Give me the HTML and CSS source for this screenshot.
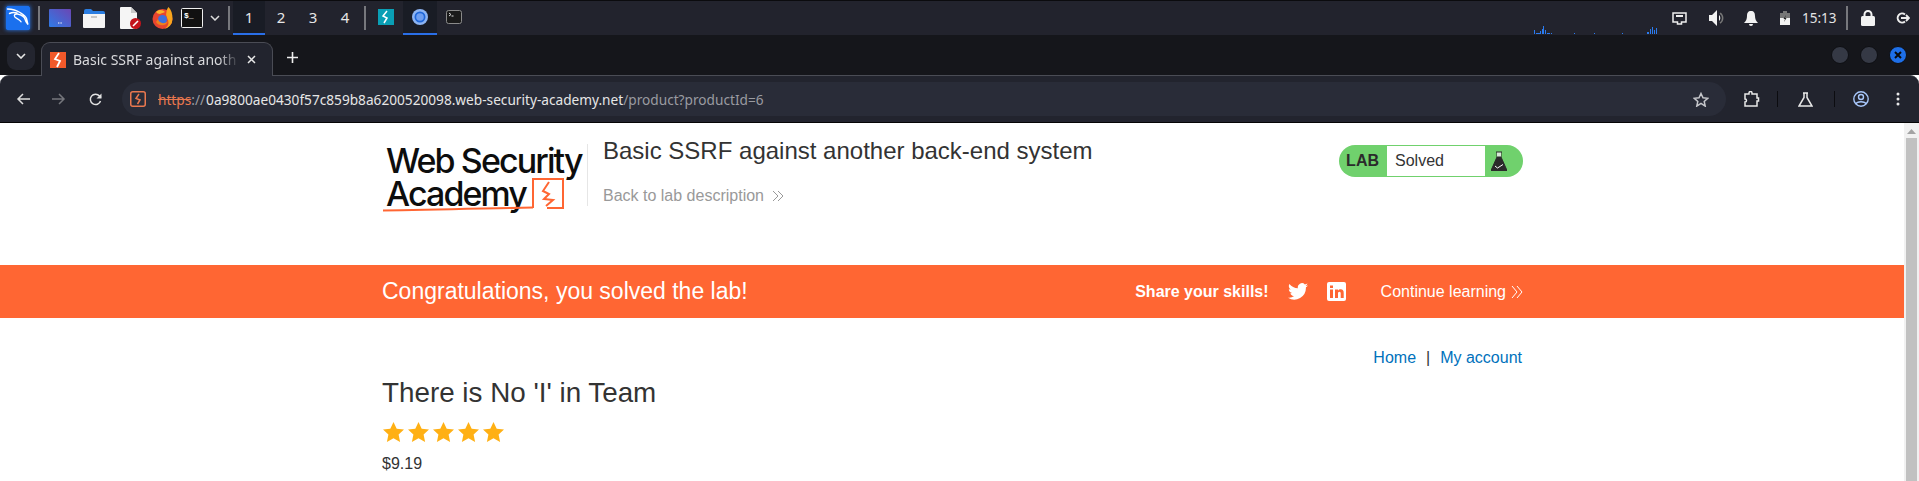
FILE: index.html
```html
<!DOCTYPE html>
<html lang="en">
<head>
<meta charset="utf-8">
<title>Basic SSRF against another back-end system</title>
<link rel="stylesheet" href="styles.css">
</head>
<body>
<div class="panel">
  <div class="kali"><svg width="24" height="24" viewBox="0 0 24 24"><rect width="24" height="24" rx="1.500" fill="#1a70ee"/><path d="M1.500 3c5 .2 9 1.300 12.500 3.500 3 1.800 5.500 3 6.500 6 .6 2 .8 4 1.500 6-1.300-1.400-2.400-3.200-2.800-5-.8-2.800-3.800-4.600-7.700-5.500-2.500-.3-3.800 1-2.700 2.800 1.500 2 5 2.400 6.200 5M3.500 7.500C6 6.300 8.500 6.300 11 7" fill="none" stroke="#fff" stroke-width="1.400" stroke-linecap="round"/></svg></div>
  <span class="sep sep-a"></span>
  <svg class="launch l1" width="22" height="18" viewBox="0 0 22 18"><defs><linearGradient id="wg" x1="0" y1="1" x2="1" y2="0"><stop offset="0" stop-color="#2f7be6"/><stop offset="1" stop-color="#6b46b4"/></linearGradient></defs><rect width="22" height="18" rx="1" fill="url(#wg)"/><path d="M9 14h4" stroke="#fff" stroke-width="1.200" stroke-dasharray="1 .6"/></svg>
  <svg class="launch l2" width="22" height="20" viewBox="0 0 22 20"><path d="M1 3a2 2 0 0 1 2-2h5l2 2h10a2 2 0 0 1 2 2v2H1z" fill="#2a7de1"/><path d="M0 6h22v13a1 1 0 0 1-1 1H1a1 1 0 0 1-1-1z" fill="#f4f4f4"/><path d="M8 9h6" stroke="#b9b9b9" stroke-width="1.500"/></svg>
  <svg class="launch l3" width="21" height="22" viewBox="0 0 21 22"><path d="M0 1a1 1 0 0 1 1-1h10l6 6v15a1 1 0 0 1-1 1H1a1 1 0 0 1-1-1z" fill="#f5f5f5"/><path d="M11 0l6 6h-6z" fill="#c9c9c9"/><circle cx="15.500" cy="16.500" r="5.500" fill="#c4141c"/><path d="M13 19l5-5" stroke="#fff" stroke-width="1.600"/></svg>
  <svg class="launch l4" width="21" height="22" viewBox="0 0 21 22"><circle cx="10.500" cy="12" r="10" fill="#e8452f"/><path d="M20.500 12a10 10 0 0 1-9 10c5-2 6-6 4-10-1-3-2-4-1-7 0-2 1-4 2-5 3 3 4 7 4 12z" fill="#f9a51d"/><path d="M4 5c3-3 7-2 9 0-1 1-4 1-5 2-2 0-3-1-4-2z" fill="#fbb22c"/><circle cx="10.500" cy="12.500" r="4.500" fill="#3f70dd"/><path d="M6 12c1 4 6 6 10 2-1 5-9 6-12 1z" fill="#f0801d"/></svg>
  <svg class="launch l5" width="22" height="20" viewBox="0 0 22 20"><rect x=".5" y=".5" width="21" height="19" rx="1" fill="#111" stroke="#f0f0f0"/><text class="term-text" x="3" y="10">$_</text></svg>
  <svg class="launch l6" width="10" height="6" viewBox="0 0 10 6"><path d="M1 1l4 4 4-4" fill="none" stroke="#ddd" stroke-width="1.500"/></svg>
  <span class="sep sep-b"></span>
  <div class="ws active">1</div>
  <div class="ws">2</div>
  <div class="ws">3</div>
  <div class="ws">4</div>
  <span class="sep sep-c"></span>
  <div class="task task-a"><svg width="16" height="16" viewBox="0 0 16 16"><rect width="16" height="16" fill="#0a9fb5"/><path d="M9 2L5 7l4 2-3 5" fill="none" stroke="#fff" stroke-width="1.500"/></svg></div>
  <div class="task task-b active"><svg width="16" height="16" viewBox="0 0 16 16"><circle cx="8" cy="8" r="8" fill="#8db4f2"/><circle cx="8" cy="8" r="5.500" fill="#1f66d8"/><circle cx="8" cy="8" r="3.800" fill="#6f9ff0"/></svg></div>
  <div class="task task-c"><svg width="16" height="14" viewBox="0 0 16 14"><rect x=".5" y=".5" width="15" height="13" rx="2" fill="#1a1a1a" stroke="#8a8a8a"/><path d="M3 3l2 1.500-2 1.500M5.500 6h2" stroke="#ddd" fill="none"/></svg></div>
  <svg class="graph" width="127" height="10" viewBox="0 0 127 10"><path d="M0 9V5h1v4zM2 9V8h4v1zM6 9V6h1v3zM8 9V4h1v5zM9 9V1h1v8zM11 9V5h1v4zM13 9V8h3v1zM17 9V8h1v1zM40 9V8h1v1zM60 9V8h1v1zM88 9V8h1v1zM113 9V7h2v2zM116 9V4h1v5zM118 9V2h1v7zM120 9V5h1v4zM122 9V3h1v6z" fill="#2a7bf0"/></svg>
  <svg class="tray t1" width="15" height="13" viewBox="0 0 15 13"><path d="M1 1h13v9H9.500v2h-4v-2H1z" fill="none" stroke="#eee" stroke-width="1.500"/><path d="M4 3h7v2H4z" fill="#eee"/></svg>
  <svg class="tray t2" width="18" height="16" viewBox="0 0 18 16"><path d="M0 5h3l5-5v16l-5-5H0z" fill="#f2f2f2"/><path d="M11 3a6 6 0 0 1 0 10" fill="none" stroke="#777" stroke-width="1.500"/><path d="M10 5a4 4 0 0 1 0 6z" fill="#f2f2f2"/></svg>
  <svg class="tray t3" width="14" height="15" viewBox="0 0 14 15"><path d="M7 0c3 0 4 2 4 5 0 3 1 5 3 7H0c2-2 3-4 3-7 0-3 1-5 4-5zM5 13h4a2 2 0 0 1-4 0z" fill="#f2f2f2"/></svg>
  <svg class="tray t4" width="10" height="14" viewBox="0 0 10 14"><path d="M3 0h4v2h3v5H0V2h3z" fill="#777"/><path d="M0 7h10v7H0z" fill="#f2f2f2"/><path d="M6 4L3.500 8H5l-1 3 2.500-4H5z" fill="#222"/></svg>
  <span class="clock">15:13</span>
  <span class="sep sep-d"></span>
  <svg class="tray t5" width="14" height="16" viewBox="0 0 14 16"><path d="M3.500 7V4.500a3.500 3.500 0 0 1 7 0V7" fill="none" stroke="#f2f2f2" stroke-width="2"/><rect y="6" width="14" height="10" rx="1.500" fill="#f2f2f2"/></svg>
  <svg class="tray t6" width="14" height="12" viewBox="0 0 14 12"><path d="M9 2.500A4.500 4.500 0 1 0 9 9.500" fill="none" stroke="#eee" stroke-width="2"/><path d="M5 6h8M10 3l3 3-3 3" fill="none" stroke="#eee" stroke-width="1.800"/></svg>
</div>

<div class="tabstrip">
  <div class="tabsearch"><svg width="10" height="6" viewBox="0 0 10 6"><path d="M1 1l4 4 4-4" fill="none" stroke="#e6e6e6" stroke-width="1.600"/></svg></div>
  <div class="tab">
    <svg class="favicon" width="16" height="16" viewBox="0 0 16 16"><rect width="16" height="16" fill="#f2592a"/><path d="M9 1L5 7l5 2-3 6" fill="none" stroke="#fff" stroke-width="1.800"/></svg>
    <span class="tab-title">Basic SSRF against anoth</span>
    <svg class="tab-x" width="9" height="9" viewBox="0 0 9 9"><path d="M1 1l7 7M8 1L1 8" stroke="#e8e8e8" stroke-width="1.500"/></svg>
  </div>
  <svg class="newtab" width="11" height="11" viewBox="0 0 11 11"><path d="M5.500 0v11M0 5.500h11" stroke="#eee" stroke-width="1.600"/></svg>
  <div class="winbtns">
    <span class="winbtn"></span>
    <span class="winbtn"></span>
    <span class="winbtn close"><svg width="8" height="8" viewBox="0 0 8 8"><path d="M1 1l6 6M7 1L1 7" stroke="#0b0b0b" stroke-width="2"/></svg></span>
  </div>
</div>

<div class="toolbar">
  <svg class="nav n1" width="14" height="12" viewBox="0 0 14 12"><path d="M14 6H2M7 1L2 6l5 5" fill="none" stroke="#ddd" stroke-width="1.500"/></svg>
  <svg class="nav n2" width="14" height="12" viewBox="0 0 14 12"><path d="M0 6h12M7 1l5 5-5 5" fill="none" stroke="#75767c" stroke-width="1.500"/></svg>
  <svg class="nav n3" width="13" height="13" viewBox="0 0 13 13"><path d="M11.500 8a5.200 5.200 0 1 1-1-5l1.500 1.500" fill="none" stroke="#e2e2e2" stroke-width="1.500"/><path d="M12.500 .5v5h-5z" fill="#e2e2e2"/></svg>
  <div class="omnibox">
    <svg class="omni-icon" width="16" height="16" viewBox="0 0 16 16"><rect x=".75" y=".75" width="14.500" height="14.500" rx="2" fill="none" stroke="#e9784f" stroke-width="1.500"/><path d="M9 3L6 7.500l4 1.500-2.500 4" fill="none" stroke="#e9784f" stroke-width="1.500"/></svg>
    <span class="url"><span class="url-s">https</span><span class="url-dim">://</span><span class="url-host">0a9800ae0430f57c859b8a6200520098.web-security-academy.net</span><span class="url-dim">/product?productId=6</span></span>
    <svg class="star" width="16" height="15" viewBox="0 0 16 15"><path d="M8 1.500l2 4.300 4.700.5-3.500 3.200 1 4.600L8 11.300l-4.200 2.800 1-4.600L1.300 6.300 6 5.800z" fill="none" stroke="#c6c7cb" stroke-width="1.500"/></svg>
  </div>
  <svg class="tool x1" width="16" height="16" viewBox="0 0 16 16"><path d="M1 3h4V2a1.500 1.500 0 0 1 3 0v1h5v4h1.500v3H13v5H1v-4c2 0 2-3 0-3z" fill="none" stroke="#e8e8e8" stroke-width="1.500"/></svg>
  <span class="tooldiv d1"></span>
  <svg class="tool x2" width="15" height="15" viewBox="0 0 15 15"><path d="M5 1h5M6 1v4.500L1 14h13L9 5.500V1" fill="none" stroke="#e8e8e8" stroke-width="1.500"/></svg>
  <span class="tooldiv d2"></span>
  <svg class="tool x3" width="16" height="16" viewBox="0 0 16 16"><circle cx="8" cy="8" r="7.200" fill="none" stroke="#a8c7fa" stroke-width="1.400"/><circle cx="8" cy="6" r="2.500" fill="none" stroke="#a8c7fa" stroke-width="1.400"/><path d="M3 13c1-3 9-3 10 0" fill="none" stroke="#a8c7fa" stroke-width="1.400"/></svg>
  <svg class="tool x4" width="4" height="14" viewBox="0 0 4 14"><circle cx="2" cy="2" r="1.500" fill="#e8e8e8"/><circle cx="2" cy="7" r="1.500" fill="#e8e8e8"/><circle cx="2" cy="12" r="1.500" fill="#e8e8e8"/></svg>
</div>

<div class="viewport">
  <div class="page">
    <header class="lab-header">
      <div class="logo">
        <div class="logo-l1">Web Security</div>
        <div class="logo-l2">Academy</div>
        <svg class="logo-mark" width="204" height="38" viewBox="0 0 204 38"><path d="M1 35.500c50-.5 100-2 150-3" fill="none" stroke="#ff6633" stroke-width="2"/><path d="M151 33V4h30v29h-16" fill="none" stroke="#ff6633" stroke-width="2"/><path d="M167 7l-6 9 6 3-5 5 9 1-7 6" fill="none" stroke="#ff6633" stroke-width="2"/></svg>
      </div>
      <div class="lab-title">
        <h2>Basic SSRF against another back-end system</h2>
        <a class="back">Back to lab description <svg class="dbl" width="12" height="12" viewBox="0 0 12 12"><path d="M1 1l5 5-5 5M6 1l5 5-5 5" fill="none" stroke="#999" stroke-width="1"/></svg></a>
      </div>
      <div class="badge">
        <span class="badge-lab">LAB</span>
        <span class="badge-status">Solved</span>
        <span class="badge-icon"><svg width="16" height="20" viewBox="0 0 16 20"><path d="M5 1h6M6 1v5L0 19.500h16L10 6V1" fill="#2b2b2b" stroke="#2b2b2b" stroke-width="1"/><path d="M6 1.500h4v4H6z" fill="#d8e8d8"/><path d="M4 15l2.500 2L12 13.500" fill="none" stroke="#fff" stroke-width="1"/></svg></span>
      </div>
    </header>
    <section class="banner">
      <div class="banner-inner">
        <h4>Congratulations, you solved the lab!</h4>
        <div class="share">
          <span class="share-label">Share your skills!</span>
          <svg class="tw" width="20" height="17" viewBox="0 0 24 20"><path d="M24 2.400c-.9.400-1.800.700-2.800.8 1-.6 1.800-1.600 2.200-2.700-1 .6-2 1-3.100 1.200A4.900 4.900 0 0 0 11.900 6.200C7.800 6 4.200 4 1.700.9c-1.300 2.200-.7 5.100 1.500 6.600-.8 0-1.600-.2-2.200-.6 0 2.400 1.700 4.500 4 5-.7.200-1.500.2-2.200.1.600 2 2.500 3.400 4.600 3.400A9.900 9.900 0 0 1 0 17.400 14 14 0 0 0 21.500 5c1-.7 1.800-1.600 2.500-2.600z" fill="#fff"/></svg>
          <svg class="li" width="19" height="19" viewBox="0 0 19 19"><rect width="19" height="19" rx="2" fill="#fff"/><path d="M3 7.500h3V16H3zM3 3.500h3v2.500H3zM8 7.500h3v1.200c.6-1 1.600-1.400 2.700-1.400 2 0 3 1.300 3 3.700V16h-3v-4.500c0-1-.4-1.700-1.300-1.700-1 0-1.400.7-1.400 1.700V16H8z" fill="#ff6633"/></svg>
          <a class="continue">Continue learning <svg class="dbl" width="12" height="14" viewBox="0 0 12 14"><path d="M1 1l5 6-5 6M6 1l5 6-5 6" fill="none" stroke="#fff" stroke-width="1"/></svg></a>
        </div>
      </div>
    </section>
    <main class="content">
      <nav class="top-links"><a>Home</a><span class="pipe">|</span><a>My account</a></nav>
      <h3>There is No 'I' in Team</h3>
      <div class="stars">
        <svg width="21" height="20" viewBox="0 0 21 20"><path class="s" d="M10.500 0l3.200 6.800 7.300.8-5.400 5 1.500 7.400-6.600-3.700L3.900 20l1.500-7.400L0 7.600l7.300-.8z"/></svg>
        <svg width="21" height="20" viewBox="0 0 21 20"><path class="s" d="M10.500 0l3.200 6.800 7.300.8-5.400 5 1.500 7.400-6.600-3.700L3.900 20l1.500-7.400L0 7.600l7.300-.8z"/></svg>
        <svg width="21" height="20" viewBox="0 0 21 20"><path class="s" d="M10.500 0l3.200 6.800 7.300.8-5.400 5 1.500 7.400-6.600-3.700L3.900 20l1.500-7.400L0 7.600l7.300-.8z"/></svg>
        <svg width="21" height="20" viewBox="0 0 21 20"><path class="s" d="M10.500 0l3.200 6.800 7.300.8-5.400 5 1.500 7.400-6.600-3.700L3.900 20l1.500-7.400L0 7.600l7.300-.8z"/></svg>
        <svg width="21" height="20" viewBox="0 0 21 20"><path class="s" d="M10.500 0l3.200 6.800 7.300.8-5.400 5 1.500 7.400-6.600-3.700L3.900 20l1.500-7.400L0 7.600l7.300-.8z"/></svg>
      </div>
      <div class="price">$9.19</div>
    </main>
  </div>
  <div class="scrollbar">
    <svg class="sb-arrow" width="9" height="5" viewBox="0 0 9 5"><path d="M4.500 0L9 5H0z" fill="#a3a3a3"/></svg>
    <div class="sb-thumb"></div>
  </div>
</div>
</body>
</html>
```
FILE: styles.css
```css
* { box-sizing: border-box; }
html, body { margin: 0; height: 100%; overflow: hidden; }
body {
  width: 1919px; height: 481px; display: flex; flex-direction: column;
  font-family: "Liberation Sans", Arial, sans-serif; background: #fff; color: #333;
}
svg { display: block; flex: none; }
h2, h3, h4 { margin: 0; font-weight: 400; }

/* desktop panel */
.panel {
  height: 35px; flex: none; display: flex; align-items: center;
  background: #22232d; border-top: 1px solid #0b0b0e;
  font-family: "Noto Sans", sans-serif;
}
.kali { margin-left: 6px; box-shadow: 0 0 4px #2a7bf0; }
.sep { width: 2px; height: 24px; background: #77787d; flex: none; }
.sep-a { margin-left: 8px; }
.l1 { margin-left: 9px; }
.l2 { margin-left: 12px; }
.l3 { margin-left: 15px; }
.l4 { margin-left: 11px; }
.l5 { margin-left: 8px; }
.l6 { margin-left: 7px; }
.term-text { font: 700 8px "Liberation Mono", monospace; fill: #fff; }
.sep-b { margin-left: 8px; margin-right: 3px; }
.ws {
  width: 32px; height: 34px; display: flex; align-items: center; justify-content: center;
  font-size: 15px; color: #e6e6e6; border-bottom: 2px solid transparent;
}
.ws.active { background: #191c25; border-bottom-color: #2a6fe8; }
.sep-c { margin-left: 3px; margin-right: 12px; }
.task {
  height: 34px; display: flex; align-items: center; justify-content: center;
  border-bottom: 2px solid transparent;
}
.task-a { width: 16px; }
.task-b { width: 34px; margin-left: 9px; }
.task-b.active { background: #191c25; border-bottom-color: #2a6fe8; }
.task-c { width: 16px; margin-left: 9px; }
.graph { margin-left: 1072px; align-self: flex-end; }
.t1 { margin-left: 11px; }
.t2 { margin-left: 22px; }
.t3 { margin-left: 17px; }
.t4 { margin-left: 22px; }
.clock { margin-left: 12px; font-size: 13.5px; color: #e4e4e4; width: 32px; white-space: nowrap; }
.sep-d { margin-left: 12px; }
.t5 { margin-left: 13px; }
.t6 { margin-left: 21px; }

/* browser tab strip */
.tabstrip {
  height: 40px; flex: none; display: flex; align-items: flex-end;
  background: #15161b; position: relative; z-index: 1;
}
.tabsearch {
  width: 28px; height: 28px; margin: 0 6px 5px 7px; border-radius: 9px; background: #23252f;
  display: flex; align-items: center; justify-content: center;
}
.tab {
  width: 232px; height: 34px; display: flex; align-items: center; padding: 0 11px 0 8px;
  background: #22242e; border: 1px solid #4a4c55; border-bottom: 0;
  border-radius: 9px 9px 0 0; margin-bottom: -1px; position: relative;
  font-family: "Noto Sans", sans-serif; color: #d8d9dc; font-size: 14px;
}
.tab-title {
  margin-left: 7px; width: 166px; overflow: hidden; white-space: nowrap;
  -webkit-mask-image: linear-gradient(90deg, #000 88%, transparent);
  mask-image: linear-gradient(90deg, #000 88%, transparent);
}
.tab-x { margin-left: auto; margin-right: 5px; }
.newtab { margin: 0 0 12px 14px; }
.winbtns { margin-left: auto; margin-right: 12px; margin-bottom: 11px; display: flex; gap: 11px; }
.winbtn {
  width: 18px; height: 18px; border-radius: 50%; background: #353945; border: 1px solid #0e0f13;
  display: flex; align-items: center; justify-content: center;
}
.winbtn.close { background: #1e6fe8; }

/* browser toolbar */
.toolbar {
  height: 48px; flex: none; display: flex; align-items: center;
  background: #22242e; border-top: 1px solid #4a4c55; border-bottom: 1px solid #050506;
  border-radius: 9px 9px 0 0;
}
.n1 { margin-left: 16px; }
.n2 { margin-left: 22px; }
.n3 { margin-left: 23px; }
.omnibox {
  width: 1604px; height: 34px; margin-left: 20px; border-radius: 17px; background: #292c38;
  display: flex; align-items: center; padding: 0 17px 0 8px;
  font-family: "Noto Sans", sans-serif; font-size: 13.67px; color: #e6e6e6;
}
.url { margin-left: 12px; white-space: nowrap; }
.url-s { color: #e9784f; text-decoration: line-through; }
.url-dim { color: #9a9ba1; }
.url-host { margin-left: 1px; }
.star { margin-left: auto; }
.x1 { margin-left: 18px; }
.tooldiv { width: 1px; height: 16px; background: #0c0c10; flex: none; }
.d1 { margin-left: 17px; }
.x2 { margin-left: 20px; }
.d2 { margin-left: 21px; }
.x3 { margin-left: 18px; }
.x4 { margin-left: 27px; }

/* page */
.viewport { flex: 1; display: flex; min-height: 0; }
.page { flex: 1; min-width: 0; }
.lab-header {
  height: 142px; display: flex; align-items: flex-start; padding: 21px 381px 0 382px;
}
.logo {
  width: 205px; height: 64px; position: relative; padding-left: 4px;
  font-family: Inter, sans-serif; color: #0d0d0d; font-weight: 500;
  font-size: 34px; letter-spacing: -1.9px; line-height: 34px; white-space: nowrap;
}
.logo-l1 { height: 33px; }
.logo-l2 { height: 31px; }
.logo-mark { position: absolute; left: 0; top: 31px; }
.lab-title {
  height: 62px; padding-left: 15px; border-left: 1px solid #e6e6e6;
}
.lab-title h2 { font-size: 24px; line-height: 28px; margin-top: -7px; color: #333; white-space: nowrap; }
.back {
  display: flex; align-items: center; gap: 8px; margin-top: 22px;
  font-size: 16px; line-height: 18px; color: #999;
}
.badge {
  margin-left: auto; margin-top: 1px; width: 184px; height: 32px; flex: none;
  display: flex; background: #70d16d; border-radius: 16px; padding: 1px 0;
}
.badge-lab { width: 48px; font-weight: 700; font-size: 16px; line-height: 30px; text-align: right; color: #2b2b2b; padding-right: 8px; }
.badge-status { width: 98px; background: #fff; font-size: 16px; line-height: 30px; padding-left: 8px; }
.badge-icon { flex: 1; display: flex; align-items: center; padding-left: 6px; }
.banner { height: 53px; background: #ff6633; color: #fff; }
.banner-inner {
  height: 100%; display: flex; align-items: center; justify-content: space-between;
  padding: 0 381px 0 382px;
}
.banner h4 { font-size: 23px; }
.share { display: flex; align-items: center; }
.share-label { font-weight: 700; font-size: 16px; }
.tw { margin-left: 19px; }
.li { margin-left: 19px; }
.continue { display: flex; align-items: center; gap: 5px; margin-left: 35px; font-size: 16px; }
.content { padding: 0 382px 0 382px; }
.top-links { display: flex; justify-content: flex-end; font-size: 16px; line-height: 18px; margin-top: 31px; color: #0071bc; }
.pipe { color: #333; margin: 0 10px; }
.content h3 { font-size: 27.8px; line-height: 32px; margin-top: 10px; }
.stars { display: flex; gap: 4px; margin-top: 13px; padding-left: 1px; }
.s { fill: #ffb014; }
.price { font-size: 16px; line-height: 18px; margin-top: 13px; }
.scrollbar { width: 15px; flex: none; background: #f1f1f1; padding-top: 6px; display: flex; flex-direction: column; align-items: center; }
.sb-thumb { width: 11px; flex: 1; margin-top: 4px; background: #c1c1c1; }
```
